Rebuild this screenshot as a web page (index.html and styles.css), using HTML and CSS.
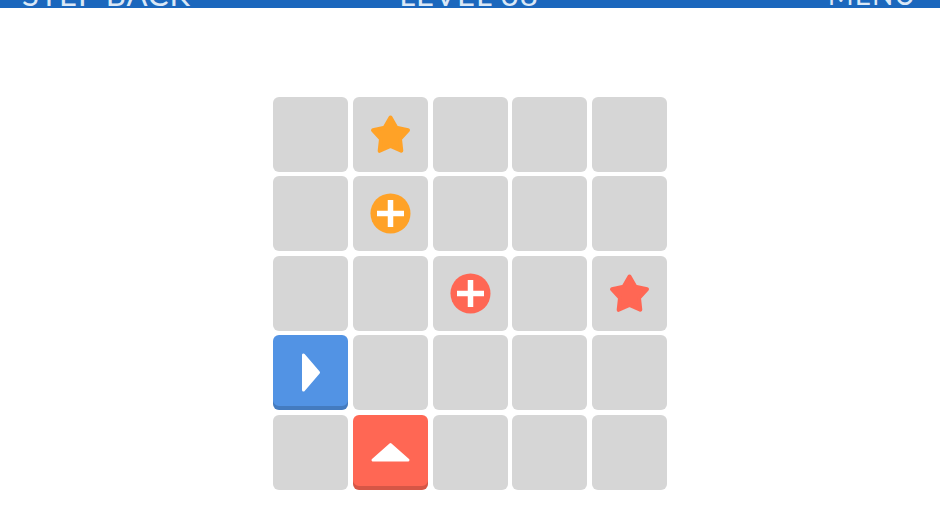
FILE: index.html
```html
<!DOCTYPE html>
<html>
<head>
    <title>Level 38</title>
    <link rel="stylesheet" href="styles.css">
</head>
<body>
    <header class="topbar">
        <span class="topbar-item step">STEP BACK</span>
        <span class="topbar-item level">LEVEL 38</span>
        <span class="topbar-item menu">MENU</span>
    </header>

    <main class="board">
        <div class="cell"></div>
        <div class="cell">
            <svg class="icon orange" viewBox="0 0 75 75"><polygon class="star" points="37.5,20.5 43.4,30.8 55,33.2 47,42 48.3,53.8 37.5,48.9 26.7,53.8 28,42 20,33.2 31.6,30.8"/></svg>
        </div>
        <div class="cell"></div>
        <div class="cell"></div>
        <div class="cell"></div>

        <div class="cell"></div>
        <div class="cell">
            <svg class="icon orange" viewBox="0 0 75 75"><circle class="disc" cx="37.5" cy="37.5" r="20"/><path class="plus" d="M24 37.5H51M37.5 24V51"/></svg>
        </div>
        <div class="cell"></div>
        <div class="cell"></div>
        <div class="cell"></div>

        <div class="cell"></div>
        <div class="cell"></div>
        <div class="cell">
            <svg class="icon red" viewBox="0 0 75 75"><circle class="disc" cx="37.5" cy="37.5" r="20"/><path class="plus" d="M24 37.5H51M37.5 24V51"/></svg>
        </div>
        <div class="cell"></div>
        <div class="cell">
            <svg class="icon red" viewBox="0 0 75 75"><polygon class="star" points="37.5,20.5 43.4,30.8 55,33.2 47,42 48.3,53.8 37.5,48.9 26.7,53.8 28,42 20,33.2 31.6,30.8"/></svg>
        </div>

        <div class="cell pusher blue">
            <svg class="icon" viewBox="0 0 75 75"><polygon class="arrow" points="30.5,20 30.5,55 45.5,37.5"/></svg>
        </div>
        <div class="cell"></div>
        <div class="cell"></div>
        <div class="cell"></div>
        <div class="cell"></div>

        <div class="cell"></div>
        <div class="cell pusher coral">
            <svg class="icon" viewBox="0 0 75 75"><polygon class="arrow" points="20,45 55,45 37.5,29.5"/></svg>
        </div>
        <div class="cell"></div>
        <div class="cell"></div>
        <div class="cell"></div>
    </main>
</body>
</html>
```

FILE: styles.css
```css
body { margin: 0; background-color: #fff; font-family: Lato, "Open Sans", Arial, sans-serif; }

.topbar { display: flex; align-items: flex-end; height: 7.5px; padding: 0 24px 0 22px; overflow: hidden; background-color: #1b67bd; }
.topbar-item { flex: 1; margin-bottom: -4px; color: #dbe8f6; font-size: 31px; letter-spacing: 1px; line-height: 36px; white-space: nowrap; }
.level { text-align: center; }
.menu { font-size: 28px; text-align: right; }

.board { display: grid; grid-template-columns: repeat(5, 75px); grid-auto-rows: 75px; gap: 4.6px; justify-content: center; padding-top: 89px; }
.cell { border-radius: 6px; background-color: #d6d6d6; }
.icon { display: block; width: 75px; height: 75px; }

.orange { color: #ffa227; }
.red { color: #ff6754; }
.star { fill: currentColor; stroke: currentColor; stroke-width: 4; stroke-linejoin: round; }
.disc { fill: currentColor; }
.plus { fill: none; stroke: #fff; stroke-width: 5.5; }

.pusher { box-shadow: inset 0 -4px 0 rgba(0, 0, 0, 0.16); }
.blue { background-color: #5293e4; }
.coral { background-color: #ff6754; }
.arrow { fill: #fff; stroke: #fff; stroke-width: 3; stroke-linejoin: round; }
```
